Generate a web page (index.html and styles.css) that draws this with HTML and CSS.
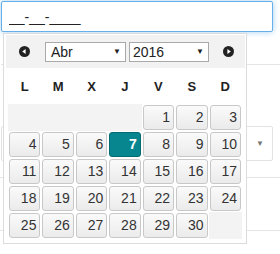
FILE: index.html
```html
<!DOCTYPE html>
<html lang="es">
<head>
<meta charset="utf-8">
<link rel="stylesheet" href="styles.css">
</head>
<body>
<div class="page">
  <input class="date-input" type="text" value="__-__-____">
  <div class="form-bg">
    <div class="bg-row bg-row-a"></div>
    <div class="bg-select"><span class="bg-caret">&#9660;</span></div>
    <div class="bg-rule bg-rule-1"></div>
    <div class="bg-rule bg-rule-2"></div>
  </div>

  <div class="datepicker">
    <div class="dp-header">
      <span class="dp-nav dp-prev"><svg width="11" height="11" viewBox="0 0 11 11"><circle cx="5.5" cy="5.5" r="5.5" fill="#222"/><path d="M3.2 5.5 L6.6 3 L6.6 8 Z" fill="#fff"/></svg></span>
      <div class="dp-select dp-month"><span>Abr</span><span class="caret">&#9660;</span></div>
      <div class="dp-select dp-year"><span>2016</span><span class="caret">&#9660;</span></div>
      <span class="dp-nav dp-next"><svg width="11" height="11" viewBox="0 0 11 11"><circle cx="5.5" cy="5.5" r="5.5" fill="#222"/><path d="M7.8 5.5 L4.4 3 L4.4 8 Z" fill="#fff"/></svg></span>
    </div>
    <table class="dp-cal">
      <thead>
        <tr><th>L</th><th>M</th><th>X</th><th>J</th><th>V</th><th>S</th><th>D</th></tr>
      </thead>
      <tbody>
        <tr><td class="empty"></td><td class="empty"></td><td class="empty"></td><td class="empty"></td><td><a class="day">1</a></td><td><a class="day">2</a></td><td><a class="day">3</a></td></tr>
        <tr><td><a class="day">4</a></td><td><a class="day">5</a></td><td><a class="day">6</a></td><td><a class="day active">7</a></td><td><a class="day">8</a></td><td><a class="day">9</a></td><td><a class="day">10</a></td></tr>
        <tr><td><a class="day">11</a></td><td><a class="day">12</a></td><td><a class="day">13</a></td><td><a class="day">14</a></td><td><a class="day">15</a></td><td><a class="day">16</a></td><td><a class="day">17</a></td></tr>
        <tr><td><a class="day">18</a></td><td><a class="day">19</a></td><td><a class="day">20</a></td><td><a class="day">21</a></td><td><a class="day">22</a></td><td><a class="day">23</a></td><td><a class="day">24</a></td></tr>
        <tr><td><a class="day">25</a></td><td><a class="day">26</a></td><td><a class="day">27</a></td><td><a class="day">28</a></td><td><a class="day">29</a></td><td><a class="day">30</a></td><td class="empty"></td></tr>
      </tbody>
    </table>
  </div>
</div>
</body>
</html>
```

FILE: styles.css
```css
html, body {
  margin: 0;
  padding: 0;
  background: #fff;
}
body {
  font-family: "Liberation Sans", Arial, sans-serif;
  color: #333;
  width: 280px;
  height: 254px;
  overflow: hidden;
}
.page {
  position: relative;
  padding: 1px 0 0 1px;
}
.date-input {
  display: block;
  box-sizing: border-box;
  width: 272px;
  height: 31px;
  margin: 0;
  padding: 0 7px;
  border: 1px solid #66afe9;
  border-radius: 2px;
  box-shadow: 0 0 6px rgba(102, 175, 233, 0.6);
  font-family: "Liberation Sans", Arial, sans-serif;
  font-size: 14px;
  color: #222;
  outline: none;
}
.form-bg {
  display: flex;
  flex-direction: column;
}
.bg-row-a {
  margin-top: 32px;
  height: 39px;
  border-top: 1px solid #e5e5e5;
}
.bg-select {
  margin-top: 22px;
  box-sizing: border-box;
  width: 272px;
  height: 35px;
  border: 1px solid #e3e3e3;
  border-radius: 2px;
  display: flex;
  justify-content: flex-end;
  align-items: center;
  padding-right: 8px;
}
.bg-caret {
  font-size: 8px;
  color: #777;
}
.bg-rule {
  height: 0;
  border-top: 1px solid #e5e5e5;
  margin-left: -1px;
}
.bg-rule-1 { margin-top: 16px; }
.bg-rule-2 { margin-top: 52px; }

.datepicker {
  position: absolute;
  left: 3px;
  top: 33px;
  box-sizing: border-box;
  width: 244px;
  height: 211px;
  border: 1px solid #dcdcdc;
  background: #fff;
  padding: 1px;
}
.dp-header {
  display: flex;
  align-items: center;
  height: 33px;
  background: #f2f2f2;
  margin: 0 0 0 1px;
}
.dp-nav {
  display: flex;
  width: 11px;
  height: 11px;
}
.dp-prev { margin-left: 13px; margin-right: 15px; }
.dp-next { margin-left: 14px; }
.dp-select {
  box-sizing: border-box;
  height: 20px;
  border: 1px solid #a9a9a9;
  background: #fff;
  display: flex;
  align-items: center;
  justify-content: space-between;
  padding: 0 4px 0 5px;
  font-size: 14px;
  color: #222;
}
.dp-month { width: 81px; }
.dp-year { width: 80px; margin-left: 3px; padding-left: 3px; }
.caret {
  font-size: 8px;
  color: #222;
}
.dp-cal {
  margin-left: 3px;
  width: 234px;
  table-layout: fixed;
  border-collapse: separate;
  border-spacing: 0;
}
.dp-cal th {
  height: 36px;
  padding: 0;
  font-size: 13px;
  font-weight: bold;
  color: #222;
  text-align: center;
}
.dp-cal td {
  padding: 1px;
  height: 25px;
}
.dp-cal td.empty {
  background: #f3f3f3;
}
.day {
  display: block;
  box-sizing: border-box;
  height: 25px;
  line-height: 23px;
  border: 1px solid #c8c8c8;
  border-radius: 3px;
  background: linear-gradient(#fafafa, #ebebeb);
  text-align: right;
  padding-right: 3px;
  font-size: 14px;
  color: #333;
}
.day.active {
  background: #07868f;
  border-color: #056a72;
  color: #fff;
  font-weight: bold;
}
```
